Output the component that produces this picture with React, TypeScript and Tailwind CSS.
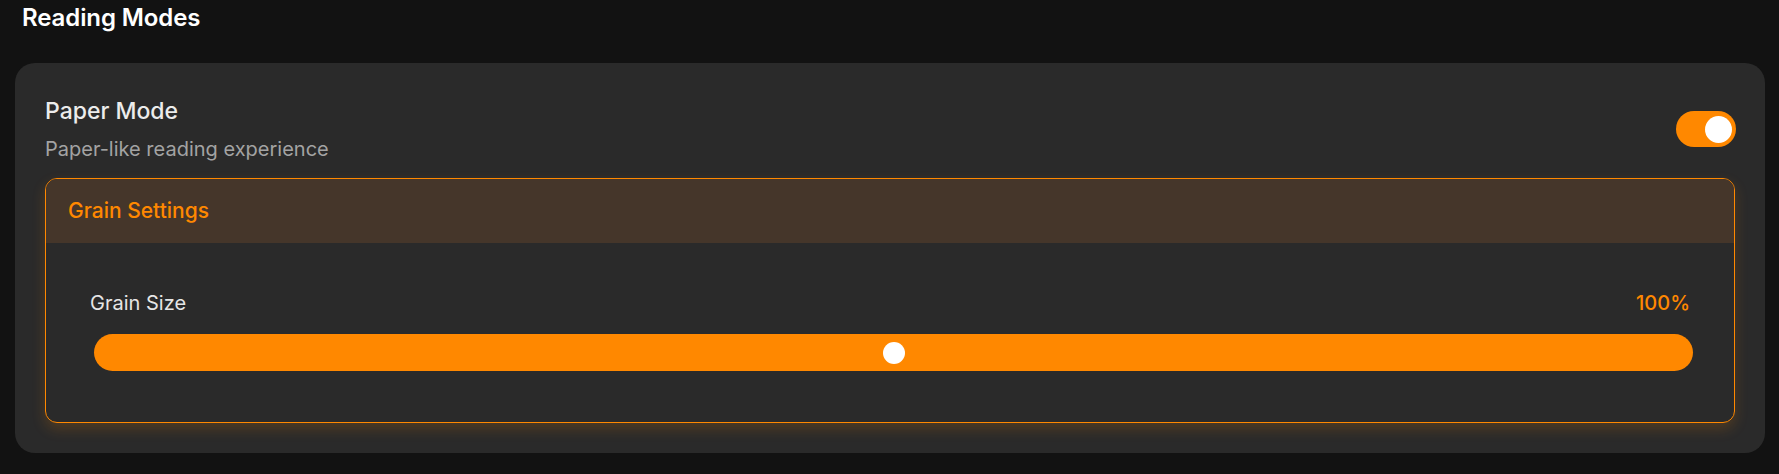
import React from "react";

export default function App() {
  return (
    <div className="min-h-[474px] w-full bg-[#121212] font-['Inter',sans-serif] overflow-hidden">
      <div className="pl-[22px] pt-[2px] h-[63px]">
        <h1 className="text-[24px] leading-[32px] font-semibold text-white tracking-[-0.1px]">Reading Modes</h1>
      </div>
      <div className="mx-[15px] w-[1750px] rounded-[20px] bg-[#2a2a2a] px-[30px] pt-[33px] pb-[30px]">
        <div className="flex items-center justify-between">
          <div>
            <div className="text-[23px] leading-[30px] font-medium text-[#ececec]">Paper Mode</div>
            <div className="mt-[10px] text-[20px] leading-[26px] text-[#a3a3a3]">Paper-like reading experience</div>
          </div>
          <div className="mr-[-1px] flex h-[36px] w-[60px] items-center justify-end rounded-full bg-[#ff8800] px-[4px]">
            <div className="h-[27px] w-[27px] rounded-full bg-white" />
          </div>
        </div>
        <div className="mt-[16px] overflow-hidden rounded-[12px] border border-[#ff8800] shadow-[0_6px_14px_rgba(255,136,0,0.18)]">
          <div className="flex h-[64px] items-center bg-[#45362a] px-[22px]">
            <span className="text-[21px] font-medium text-[#ff8800]">Grain Settings</span>
          </div>
          <div className="pt-[47px] pb-[51px]">
            <div className="flex items-center justify-between pl-[44px] pr-[44px]">
              <span className="text-[20px] leading-[26px] text-[#e6e6e6]">Grain Size</span>
              <span className="text-[20px] leading-[26px] font-medium text-[#ff8800]">100%</span>
            </div>
            <div className="ml-[48px] mr-[41px] mt-[18px] relative h-[37px] rounded-full bg-[#ff8800]">
              <div className="absolute left-1/2 top-1/2 h-[22px] w-[22px] -translate-x-1/2 -translate-y-1/2 rounded-full bg-white" />
            </div>
          </div>
        </div>
      </div>
    </div>
  );
}
